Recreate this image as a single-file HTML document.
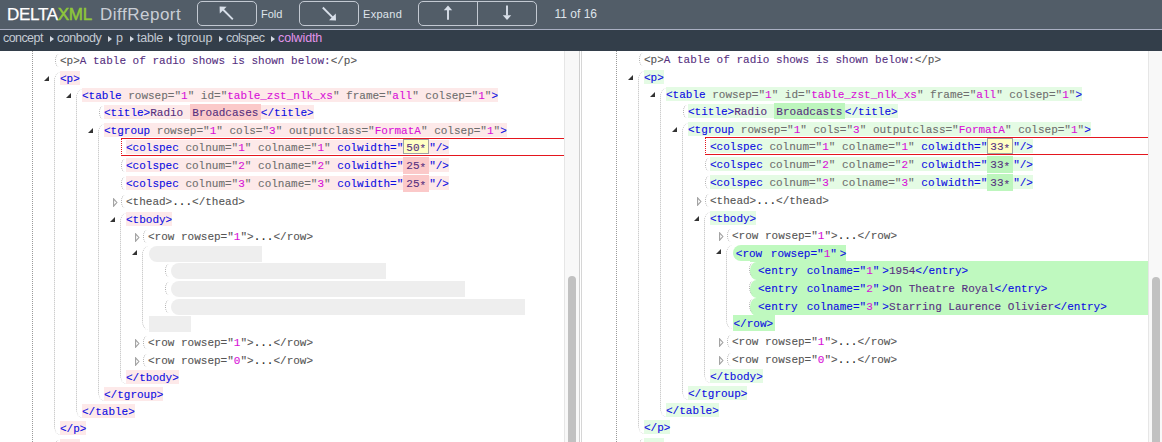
<!DOCTYPE html><html><head><meta charset="utf-8"><style>
*{margin:0;padding:0;box-sizing:border-box}
html,body{width:1162px;height:442px;overflow:hidden;background:#fff}
body{position:relative;font-family:"Liberation Sans", sans-serif}
.a{position:absolute}
.ln{position:absolute;height:14px;line-height:16px;white-space:pre;font-family:"Liberation Mono", monospace;font-size:11px;-webkit-text-stroke:0.1px}
.t{color:#0c0ce2} .n{color:#6e6e6e} .v{color:#d810d8} .x{color:#56307f} .g{color:#555555} .k{color:#222222}
.arc{position:absolute;width:4px;border-left:1px dotted #a8a8a8;border-radius:4px 0 0 4px/7px 0 0 7px}
.tri{position:absolute;width:0;height:0;border-style:solid;border-width:0 0 5px 5px;border-color:transparent transparent #333 transparent}
.ctri{position:absolute;width:0;height:0}
</style></head><body>
<div class="a" style="left:0;top:0;width:1162px;height:29px;background:#525d68"></div>
<div class="a" style="left:0;top:29px;width:1162px;height:1px;background:#a9afc2"></div>
<div class="a" style="left:0;top:30px;width:1162px;height:21px;background:#333e4a"></div>
<div class="a" style="left:7px;top:4px;font-size:17px;line-height:22px;white-space:pre"><span style="color:#fff;letter-spacing:-0.3px;-webkit-text-stroke:0.25px #fff">DELTA</span><span style="color:#8fc73a;letter-spacing:-0.3px;-webkit-text-stroke:0.5px #8fc73a">XML</span></div>
<div class="a" style="left:100px;top:4px;font-size:17px;line-height:22px;white-space:pre;color:#c9ced6;letter-spacing:0.5px">DiffReport</div>
<div class="a" style="left:197px;top:1px;width:60px;height:25px;border:1px solid #c3c9d2;border-radius:5px"></div>
<div class="a" style="left:299px;top:1px;width:60px;height:25px;border:1px solid #c3c9d2;border-radius:5px"></div>
<div class="a" style="left:418px;top:1px;width:119px;height:25px;border:1px solid #c3c9d2;border-radius:5px"></div>
<div class="a" style="left:477px;top:1px;width:1px;height:25px;background:#c3c9d2"></div>
<svg class="a" style="left:0;top:0" width="620" height="29" viewBox="0 0 620 29">
<g stroke="#d8dfe9" stroke-width="1.9" fill="#d8dfe9">
<line x1="232.8" y1="19.3" x2="223" y2="9.5"/><polygon points="219.6,6.6 226.6,6.8 219.8,13.6" stroke="none"/>
<line x1="322.8" y1="7.5" x2="332.6" y2="17.3"/><polygon points="336,20.5 329,20.3 335.8,13.5" stroke="none"/>
<line x1="448" y1="19.8" x2="448" y2="9.5"/><polygon points="448,5.6 443.8,10.2 452.2,10.2" stroke="none"/>
<line x1="507" y1="5.6" x2="507" y2="15.5"/><polygon points="507,20 502.8,15.3 511.2,15.3" stroke="none"/>
</g></svg>
<div class="a" style="left:261px;top:7px;font-size:11px;line-height:14px;color:#dfe4ea">Fold</div>
<div class="a" style="left:363px;top:7px;font-size:11px;line-height:14px;color:#dfe4ea;letter-spacing:0.3px">Expand</div>
<div class="a" style="left:554.5px;top:6px;font-size:12px;line-height:16px;color:#dfe4ea;letter-spacing:0px">11 of 16</div>
<div class="a" style="left:3px;top:30px;font-size:12.5px;line-height:16px;color:#c3cad3;letter-spacing:-0.57px">concept</div>
<div class="a" style="left:57px;top:30px;font-size:12.5px;line-height:16px;color:#c3cad3;letter-spacing:-0.43px">conbody</div>
<div class="a" style="left:116px;top:30px;font-size:12.5px;line-height:16px;color:#c3cad3;letter-spacing:0px">p</div>
<div class="a" style="left:137px;top:30px;font-size:12.5px;line-height:16px;color:#c3cad3;letter-spacing:-0.2px">table</div>
<div class="a" style="left:177px;top:30px;font-size:12.5px;line-height:16px;color:#c3cad3;letter-spacing:0px">tgroup</div>
<div class="a" style="left:226px;top:30px;font-size:12.5px;line-height:16px;color:#c3cad3;letter-spacing:-0.57px">colspec</div>
<div class="a" style="left:278px;top:30px;font-size:12.5px;line-height:16px;color:#e294ea;letter-spacing:-0.12px">colwidth</div>
<div class="a" style="left:49.5px;top:35.5px;width:0;height:0;border-style:solid;border-width:3.6px 0 3.6px 4.5px;border-color:transparent transparent transparent #d3d9e2"></div>
<div class="a" style="left:107.5px;top:35.5px;width:0;height:0;border-style:solid;border-width:3.6px 0 3.6px 4.5px;border-color:transparent transparent transparent #d3d9e2"></div>
<div class="a" style="left:129.5px;top:35.5px;width:0;height:0;border-style:solid;border-width:3.6px 0 3.6px 4.5px;border-color:transparent transparent transparent #d3d9e2"></div>
<div class="a" style="left:168.5px;top:35.5px;width:0;height:0;border-style:solid;border-width:3.6px 0 3.6px 4.5px;border-color:transparent transparent transparent #d3d9e2"></div>
<div class="a" style="left:218.5px;top:35.5px;width:0;height:0;border-style:solid;border-width:3.6px 0 3.6px 4.5px;border-color:transparent transparent transparent #d3d9e2"></div>
<div class="a" style="left:270.5px;top:35.5px;width:0;height:0;border-style:solid;border-width:3.6px 0 3.6px 4.5px;border-color:transparent transparent transparent #d3d9e2"></div>
<div class="a" style="left:0;top:51px;width:564px;height:391px;overflow:hidden"><div class="a" style="left:0;top:-51px;width:1162px;height:442px">
<div class="arc" style="left:55px;top:53.5px;height:13px"></div>
<div class="ln" style="left:60px;top:53px;"><span class="g">&lt;p&gt;</span><span class="x">A table of radio shows is shown below:</span><span class="g">&lt;/p&gt;</span></div>
<div class="tri" style="left:44px;top:75.5px"></div>
<div class="arc" style="left:54px;top:71.5px;width:6px;height:363px;border-left-color:#bdbdbd;border-radius:6px 0 0 6px/9px 0 0 9px"></div>
<div class="ln" style="left:60px;top:71px;background:#fde9e9;"><span class="t">&lt;p&gt;</span></div>
<div class="tri" style="left:66px;top:92.5px"></div>
<div class="arc" style="left:76px;top:88.5px;width:6px;height:329px;border-left-color:#bdbdbd;border-radius:6px 0 0 6px/9px 0 0 9px"></div>
<div class="ln" style="left:82px;top:88px;background:#fde9e9;"><span class="t">&lt;table</span><span class="n"> rowsep=&quot;</span><span class="v">1</span><span class="n">&quot;</span><span class="n"> id=&quot;</span><span class="v">table_zst_nlk_xs</span><span class="n">&quot;</span><span class="n"> frame=&quot;</span><span class="v">all</span><span class="n">&quot;</span><span class="n"> colsep=&quot;</span><span class="v">1</span><span class="n">&quot;</span><span class="t">&gt;</span></div>
<div class="arc" style="left:99px;top:105.5px;height:13px"></div>
<div class="ln" style="left:104px;top:105px;background:#fde9e9;"><span class="t">&lt;title&gt;</span><span class="x">Radio </span><span class="x" style="background:#fbc9c9;padding:2.8px 2.5px 0.7px">Broadcases</span><span class="t">&lt;/title&gt;</span></div>
<div class="tri" style="left:88px;top:127.5px"></div>
<div class="arc" style="left:98px;top:123.5px;width:6px;height:277px;border-left-color:#bdbdbd;border-radius:6px 0 0 6px/9px 0 0 9px"></div>
<div class="ln" style="left:104px;top:123px;background:#fde9e9;"><span class="t">&lt;tgroup</span><span class="n"> rowsep=&quot;</span><span class="v">1</span><span class="n">&quot;</span><span class="n"> cols=&quot;</span><span class="v">3</span><span class="n">&quot;</span><span class="n"> outputclass=&quot;</span><span class="v">FormatA</span><span class="n">&quot;</span><span class="n"> colsep=&quot;</span><span class="v">1</span><span class="n">&quot;</span><span class="t">&gt;</span></div>
<div class="a" style="left:121px;top:137.5px;width:443px;height:18px;border-top:1px solid #e4161e;border-bottom:1px solid #e4161e;border-left:1px dotted #e4161e"></div>
<div class="ln" style="left:126px;top:140px;background:#fde9e9;"><span class="t">&lt;colspec</span><span class="n"> colnum=&quot;</span><span class="v">1</span><span class="n">&quot;</span><span class="n"> colname=&quot;</span><span class="v">1</span><span class="n">&quot;</span><span class="t"> colwidth=&quot;</span><span class="x" style="display:inline-block;box-sizing:border-box;height:15.5px;line-height:16px;position:relative;top:-1.2px;vertical-align:top;background:#ffffc4;border:1px solid #a4a4a4;padding:0 2px">50<span style="position:relative;top:1.5px">*</span></span><span class="t">&quot;/&gt;</span></div>
<div class="arc" style="left:121px;top:158.5px;height:13px"></div>
<div class="ln" style="left:126px;top:158px;background:#fde9e9;"><span class="t">&lt;colspec</span><span class="n"> colnum=&quot;</span><span class="v">2</span><span class="n">&quot;</span><span class="n"> colname=&quot;</span><span class="v">2</span><span class="n">&quot;</span><span class="t"> colwidth=&quot;</span><span class="x" style="background:#fbc9c9;padding:2.8px 3px 1.7px">25<span style="position:relative;top:1.5px">*</span></span><span class="t">&quot;/&gt;</span></div>
<div class="arc" style="left:121px;top:176.5px;height:13px"></div>
<div class="ln" style="left:126px;top:176px;background:#fde9e9;"><span class="t">&lt;colspec</span><span class="n"> colnum=&quot;</span><span class="v">3</span><span class="n">&quot;</span><span class="n"> colname=&quot;</span><span class="v">3</span><span class="n">&quot;</span><span class="t"> colwidth=&quot;</span><span class="x" style="background:#fbc9c9;padding:2.8px 3px 1.7px">25<span style="position:relative;top:1.5px">*</span></span><span class="t">&quot;/&gt;</span></div>
<svg class="a" style="left:113px;top:197.5px" width="6" height="9" viewBox="0 0 6 9"><path d="M0.6 0.8 L3.9 4.5 L0.6 8.2 Z" fill="none" stroke="#a0a0a0" stroke-width="1.1"/></svg>
<div class="arc" style="left:121px;top:194.5px;height:13px"></div>
<div class="ln" style="left:126px;top:194px;"><span class="g">&lt;thead&gt;</span><span class="k">...</span><span class="g">&lt;/thead&gt;</span></div>
<div class="tri" style="left:110px;top:216.5px"></div>
<div class="arc" style="left:120px;top:212.5px;width:6px;height:171px;border-left-color:#bdbdbd;border-radius:6px 0 0 6px/9px 0 0 9px"></div>
<div class="ln" style="left:126px;top:212px;background:#fde9e9;"><span class="t">&lt;tbody&gt;</span></div>
<svg class="a" style="left:135px;top:232.5px" width="6" height="9" viewBox="0 0 6 9"><path d="M0.6 0.8 L3.9 4.5 L0.6 8.2 Z" fill="none" stroke="#a0a0a0" stroke-width="1.1"/></svg>
<div class="arc" style="left:143px;top:229.5px;height:13px"></div>
<div class="ln" style="left:148px;top:229px;"><span class="g">&lt;row</span><span class="g"> rowsep=&quot;</span><span class="v">1</span><span class="g">&quot;&gt;</span><span class="k">...</span><span class="g">&lt;/row&gt;</span></div>
<div class="tri" style="left:132px;top:250.0px"></div>
<div class="arc" style="left:142px;top:246.0px;width:6px;height:83.5px;border-left-color:#bdbdbd;border-radius:6px 0 0 6px/9px 0 0 9px"></div>
<div class="a" style="left:149px;top:245.5px;width:113px;height:16px;background:#eeeeee;border-radius:8px 0 0 8px"></div>
<div class="arc" style="left:165px;top:263.5px;height:13px"></div>
<div class="a" style="left:170.8px;top:263px;width:215px;height:16px;background:#eeeeee;border-radius:8px 0 0 8px"></div>
<div class="arc" style="left:165px;top:281.5px;height:13px"></div>
<div class="a" style="left:170.8px;top:281px;width:294.5px;height:16px;background:#eeeeee;border-radius:8px 0 0 8px"></div>
<div class="arc" style="left:165px;top:299.5px;height:13px"></div>
<div class="a" style="left:170.8px;top:299px;width:354px;height:16px;background:#eeeeee;border-radius:8px 0 0 8px"></div>
<div class="a" style="left:149px;top:316px;width:42px;height:16px;background:#eeeeee"></div>
<svg class="a" style="left:135px;top:338.5px" width="6" height="9" viewBox="0 0 6 9"><path d="M0.6 0.8 L3.9 4.5 L0.6 8.2 Z" fill="none" stroke="#a0a0a0" stroke-width="1.1"/></svg>
<div class="arc" style="left:143px;top:335.5px;height:13px"></div>
<div class="ln" style="left:148px;top:335px;"><span class="g">&lt;row</span><span class="g"> rowsep=&quot;</span><span class="v">1</span><span class="g">&quot;&gt;</span><span class="k">...</span><span class="g">&lt;/row&gt;</span></div>
<svg class="a" style="left:135px;top:356.5px" width="6" height="9" viewBox="0 0 6 9"><path d="M0.6 0.8 L3.9 4.5 L0.6 8.2 Z" fill="none" stroke="#a0a0a0" stroke-width="1.1"/></svg>
<div class="arc" style="left:143px;top:353.5px;height:13px"></div>
<div class="ln" style="left:148px;top:353px;"><span class="g">&lt;row</span><span class="g"> rowsep=&quot;</span><span class="v">0</span><span class="g">&quot;&gt;</span><span class="k">...</span><span class="g">&lt;/row&gt;</span></div>
<div class="ln" style="left:126px;top:370px;background:#fde9e9;"><span class="t">&lt;/tbody&gt;</span></div>
<div class="ln" style="left:104px;top:387px;background:#fde9e9;"><span class="t">&lt;/tgroup&gt;</span></div>
<div class="ln" style="left:82px;top:404px;background:#fde9e9;"><span class="t">&lt;/table&gt;</span></div>
<div class="ln" style="left:60px;top:421px;background:#fde9e9;"><span class="t">&lt;/p&gt;</span></div>
<div class="arc" style="left:55px;top:439.5px;height:13px"></div>
<div class="ln" style="left:60px;top:439px;background:#fde9e9;"><span class="t">&lt;p&gt;</span></div>
<div class="a" style="left:32px;top:51px;width:1px;height:391px;border-left:1px dotted #9a9a9a"></div>
</div></div>
<div class="a" style="left:582px;top:51px;width:566px;height:391px;overflow:hidden"><div class="a" style="left:-582px;top:-51px;width:1162px;height:442px">
<div class="arc" style="left:639px;top:52.7px;height:13px"></div>
<div class="ln" style="left:644px;top:52.2px;"><span class="g">&lt;p&gt;</span><span class="x">A table of radio shows is shown below:</span><span class="g">&lt;/p&gt;</span></div>
<div class="tri" style="left:628px;top:74.7px"></div>
<div class="arc" style="left:638px;top:70.7px;width:6px;height:363.0px;border-left-color:#bdbdbd;border-radius:6px 0 0 6px/9px 0 0 9px"></div>
<div class="ln" style="left:644px;top:70.2px;background:#e4fbe4;"><span class="t">&lt;p&gt;</span></div>
<div class="tri" style="left:650px;top:91.7px"></div>
<div class="arc" style="left:660px;top:87.7px;width:6px;height:329.0px;border-left-color:#bdbdbd;border-radius:6px 0 0 6px/9px 0 0 9px"></div>
<div class="ln" style="left:666px;top:87.2px;background:#e4fbe4;"><span class="t">&lt;table</span><span class="n"> rowsep=&quot;</span><span class="v">1</span><span class="n">&quot;</span><span class="n"> id=&quot;</span><span class="v">table_zst_nlk_xs</span><span class="n">&quot;</span><span class="n"> frame=&quot;</span><span class="v">all</span><span class="n">&quot;</span><span class="n"> colsep=&quot;</span><span class="v">1</span><span class="n">&quot;</span><span class="t">&gt;</span></div>
<div class="arc" style="left:683px;top:104.7px;height:13px"></div>
<div class="ln" style="left:688px;top:104.2px;background:#e4fbe4;"><span class="t">&lt;title&gt;</span><span class="x">Radio </span><span class="x" style="background:#bdf6bd;padding:2.8px 2.5px 0.7px">Broadcasts</span><span class="t">&lt;/title&gt;</span></div>
<div class="tri" style="left:672px;top:126.7px"></div>
<div class="arc" style="left:682px;top:122.7px;width:6px;height:277.0px;border-left-color:#bdbdbd;border-radius:6px 0 0 6px/9px 0 0 9px"></div>
<div class="ln" style="left:688px;top:122.2px;background:#e4fbe4;"><span class="t">&lt;tgroup</span><span class="n"> rowsep=&quot;</span><span class="v">1</span><span class="n">&quot;</span><span class="n"> cols=&quot;</span><span class="v">3</span><span class="n">&quot;</span><span class="n"> outputclass=&quot;</span><span class="v">FormatA</span><span class="n">&quot;</span><span class="n"> colsep=&quot;</span><span class="v">1</span><span class="n">&quot;</span><span class="t">&gt;</span></div>
<div class="a" style="left:705px;top:136.7px;width:443px;height:18px;border-top:1px solid #e4161e;border-bottom:1px solid #e4161e;border-left:1px dotted #e4161e"></div>
<div class="ln" style="left:710px;top:139.2px;background:#e4fbe4;"><span class="t">&lt;colspec</span><span class="n"> colnum=&quot;</span><span class="v">1</span><span class="n">&quot;</span><span class="n"> colname=&quot;</span><span class="v">1</span><span class="n">&quot;</span><span class="t"> colwidth=&quot;</span><span class="x" style="display:inline-block;box-sizing:border-box;height:15.5px;line-height:16px;position:relative;top:-1.2px;vertical-align:top;background:#ffffc4;border:1px solid #a4a4a4;padding:0 2px">33<span style="position:relative;top:1.5px">*</span></span><span class="t">&quot;/&gt;</span></div>
<div class="arc" style="left:705px;top:157.7px;height:13px"></div>
<div class="ln" style="left:710px;top:157.2px;background:#e4fbe4;"><span class="t">&lt;colspec</span><span class="n"> colnum=&quot;</span><span class="v">2</span><span class="n">&quot;</span><span class="n"> colname=&quot;</span><span class="v">2</span><span class="n">&quot;</span><span class="t"> colwidth=&quot;</span><span class="x" style="background:#bdf6bd;padding:2.8px 3px 1.7px">33<span style="position:relative;top:1.5px">*</span></span><span class="t">&quot;/&gt;</span></div>
<div class="arc" style="left:705px;top:175.7px;height:13px"></div>
<div class="ln" style="left:710px;top:175.2px;background:#e4fbe4;"><span class="t">&lt;colspec</span><span class="n"> colnum=&quot;</span><span class="v">3</span><span class="n">&quot;</span><span class="n"> colname=&quot;</span><span class="v">3</span><span class="n">&quot;</span><span class="t"> colwidth=&quot;</span><span class="x" style="background:#bdf6bd;padding:2.8px 3px 1.7px">33<span style="position:relative;top:1.5px">*</span></span><span class="t">&quot;/&gt;</span></div>
<svg class="a" style="left:697px;top:196.7px" width="6" height="9" viewBox="0 0 6 9"><path d="M0.6 0.8 L3.9 4.5 L0.6 8.2 Z" fill="none" stroke="#a0a0a0" stroke-width="1.1"/></svg>
<div class="arc" style="left:705px;top:193.7px;height:13px"></div>
<div class="ln" style="left:710px;top:193.2px;"><span class="g">&lt;thead&gt;</span><span class="k">...</span><span class="g">&lt;/thead&gt;</span></div>
<div class="tri" style="left:694px;top:215.7px"></div>
<div class="arc" style="left:704px;top:211.7px;width:6px;height:171.0px;border-left-color:#bdbdbd;border-radius:6px 0 0 6px/9px 0 0 9px"></div>
<div class="ln" style="left:710px;top:211.2px;background:#e4fbe4;"><span class="t">&lt;tbody&gt;</span></div>
<svg class="a" style="left:719px;top:231.7px" width="6" height="9" viewBox="0 0 6 9"><path d="M0.6 0.8 L3.9 4.5 L0.6 8.2 Z" fill="none" stroke="#a0a0a0" stroke-width="1.1"/></svg>
<div class="arc" style="left:727px;top:228.7px;height:13px"></div>
<div class="ln" style="left:732px;top:228.2px;"><span class="g">&lt;row</span><span class="g"> rowsep=&quot;</span><span class="v">1</span><span class="g">&quot;&gt;</span><span class="k">...</span><span class="g">&lt;/row&gt;</span></div>
<div class="tri" style="left:716px;top:249.2px"></div>
<div class="arc" style="left:726px;top:245.2px;width:6px;height:83.5px;border-left-color:#bdbdbd;border-radius:6px 0 0 6px/9px 0 0 9px"></div>
<div class="a" style="left:733.2px;top:245.1px;width:112.8px;height:16px;background:#bff9bf;border-radius:8px 0 0 8px"></div>
<div class="a" style="left:749.7px;top:261.2px;width:398.29999999999995px;height:53.5px;background:#bff9bf;border-radius:0"></div>
<div class="a" style="left:733.2px;top:314.7px;width:42px;height:16.5px;background:#bff9bf"></div>
<div class="a" style="left:749.7px;top:261.7px;width:9px;height:53.0px;background:#fff"></div>
<div class="a" style="left:749.7px;top:261.7px;width:18px;height:18.0px;background:#bff9bf;border-radius:6.5px 0 0 6.5px/8.5px 0 0 8.5px"></div>
<div class="arc" style="left:749px;top:262.7px;height:13px"></div>
<div class="a" style="left:749.7px;top:279.7px;width:18px;height:18.0px;background:#bff9bf;border-radius:6.5px 0 0 6.5px/8.5px 0 0 8.5px"></div>
<div class="arc" style="left:749px;top:280.7px;height:13px"></div>
<div class="a" style="left:749.7px;top:297.7px;width:18px;height:18.0px;background:#bff9bf;border-radius:6.5px 0 0 6.5px/8.5px 0 0 8.5px"></div>
<div class="arc" style="left:749px;top:298.7px;height:13px"></div>
<div class="ln" style="left:732px;top:244.7px;margin-left:3.8px;margin-top:1px"><span class="t">&lt;row</span><span class="t" style="padding-left:2px"> rowsep=&quot;</span><span class="v">1</span><span class="t">&quot;</span><span class="t" style="padding-left:3px">&gt;</span></div>
<div class="ln" style="left:754px;top:262.2px;margin-left:4px;margin-top:1px"><span class="t">&lt;entry</span><span class="t" style="padding-left:2.5px"> colname=&quot;</span><span class="v">1</span><span class="t">&quot;</span><span class="t" style="padding-left:3px">&gt;</span><span class="x">1954</span><span class="t">&lt;/entry&gt;</span></div>
<div class="ln" style="left:754px;top:280.2px;margin-left:4px;margin-top:1px"><span class="t">&lt;entry</span><span class="t" style="padding-left:2.5px"> colname=&quot;</span><span class="v">2</span><span class="t">&quot;</span><span class="t" style="padding-left:3px">&gt;</span><span class="x">On Theatre Royal</span><span class="t">&lt;/entry&gt;</span></div>
<div class="ln" style="left:754px;top:298.2px;margin-left:4px;margin-top:1px"><span class="t">&lt;entry</span><span class="t" style="padding-left:2.5px"> colname=&quot;</span><span class="v">3</span><span class="t">&quot;</span><span class="t" style="padding-left:3px">&gt;</span><span class="x">Starring Laurence Olivier</span><span class="t">&lt;/entry&gt;</span></div>
<div class="ln" style="left:732px;top:315.2px;margin-left:1.5px;margin-top:1px"><span class="t">&lt;/row&gt;</span></div>
<svg class="a" style="left:719px;top:337.7px" width="6" height="9" viewBox="0 0 6 9"><path d="M0.6 0.8 L3.9 4.5 L0.6 8.2 Z" fill="none" stroke="#a0a0a0" stroke-width="1.1"/></svg>
<div class="arc" style="left:727px;top:334.7px;height:13px"></div>
<div class="ln" style="left:732px;top:334.2px;"><span class="g">&lt;row</span><span class="g"> rowsep=&quot;</span><span class="v">1</span><span class="g">&quot;&gt;</span><span class="k">...</span><span class="g">&lt;/row&gt;</span></div>
<svg class="a" style="left:719px;top:355.7px" width="6" height="9" viewBox="0 0 6 9"><path d="M0.6 0.8 L3.9 4.5 L0.6 8.2 Z" fill="none" stroke="#a0a0a0" stroke-width="1.1"/></svg>
<div class="arc" style="left:727px;top:352.7px;height:13px"></div>
<div class="ln" style="left:732px;top:352.2px;"><span class="g">&lt;row</span><span class="g"> rowsep=&quot;</span><span class="v">0</span><span class="g">&quot;&gt;</span><span class="k">...</span><span class="g">&lt;/row&gt;</span></div>
<div class="ln" style="left:710px;top:369.2px;background:#e4fbe4;"><span class="t">&lt;/tbody&gt;</span></div>
<div class="ln" style="left:688px;top:386.2px;background:#e4fbe4;"><span class="t">&lt;/tgroup&gt;</span></div>
<div class="ln" style="left:666px;top:403.2px;background:#e4fbe4;"><span class="t">&lt;/table&gt;</span></div>
<div class="ln" style="left:644px;top:420.2px;background:#e4fbe4;"><span class="t">&lt;/p&gt;</span></div>
<div class="arc" style="left:639px;top:438.7px;height:13px"></div>
<div class="ln" style="left:644px;top:438.2px;background:#e4fbe4;"><span class="t">&lt;p&gt;</span></div>
<div class="a" style="left:616px;top:51px;width:1px;height:391px;border-left:1px dotted #9a9a9a"></div>
</div></div>
<div class="a" style="left:564px;top:51px;width:15px;height:391px;background:#f8f8f8;border-left:1px solid #e6e6e6"></div>
<div class="a" style="left:568px;top:276px;width:8px;height:170px;background:#c1c1c1;border-radius:4px 4px 0 0"></div>
<div class="a" style="left:579px;top:51px;width:1px;height:391px;background:#cfcfcf"></div>
<div class="a" style="left:581px;top:51px;width:1px;height:391px;background:#d6d6d6"></div>
<div class="a" style="left:1148px;top:51px;width:14px;height:391px;background:#f8f8f8;border-left:1px solid #e6e6e6"></div>
<div class="a" style="left:1152px;top:277px;width:8px;height:170px;background:#c1c1c1;border-radius:4px 4px 0 0"></div>
</body></html>
